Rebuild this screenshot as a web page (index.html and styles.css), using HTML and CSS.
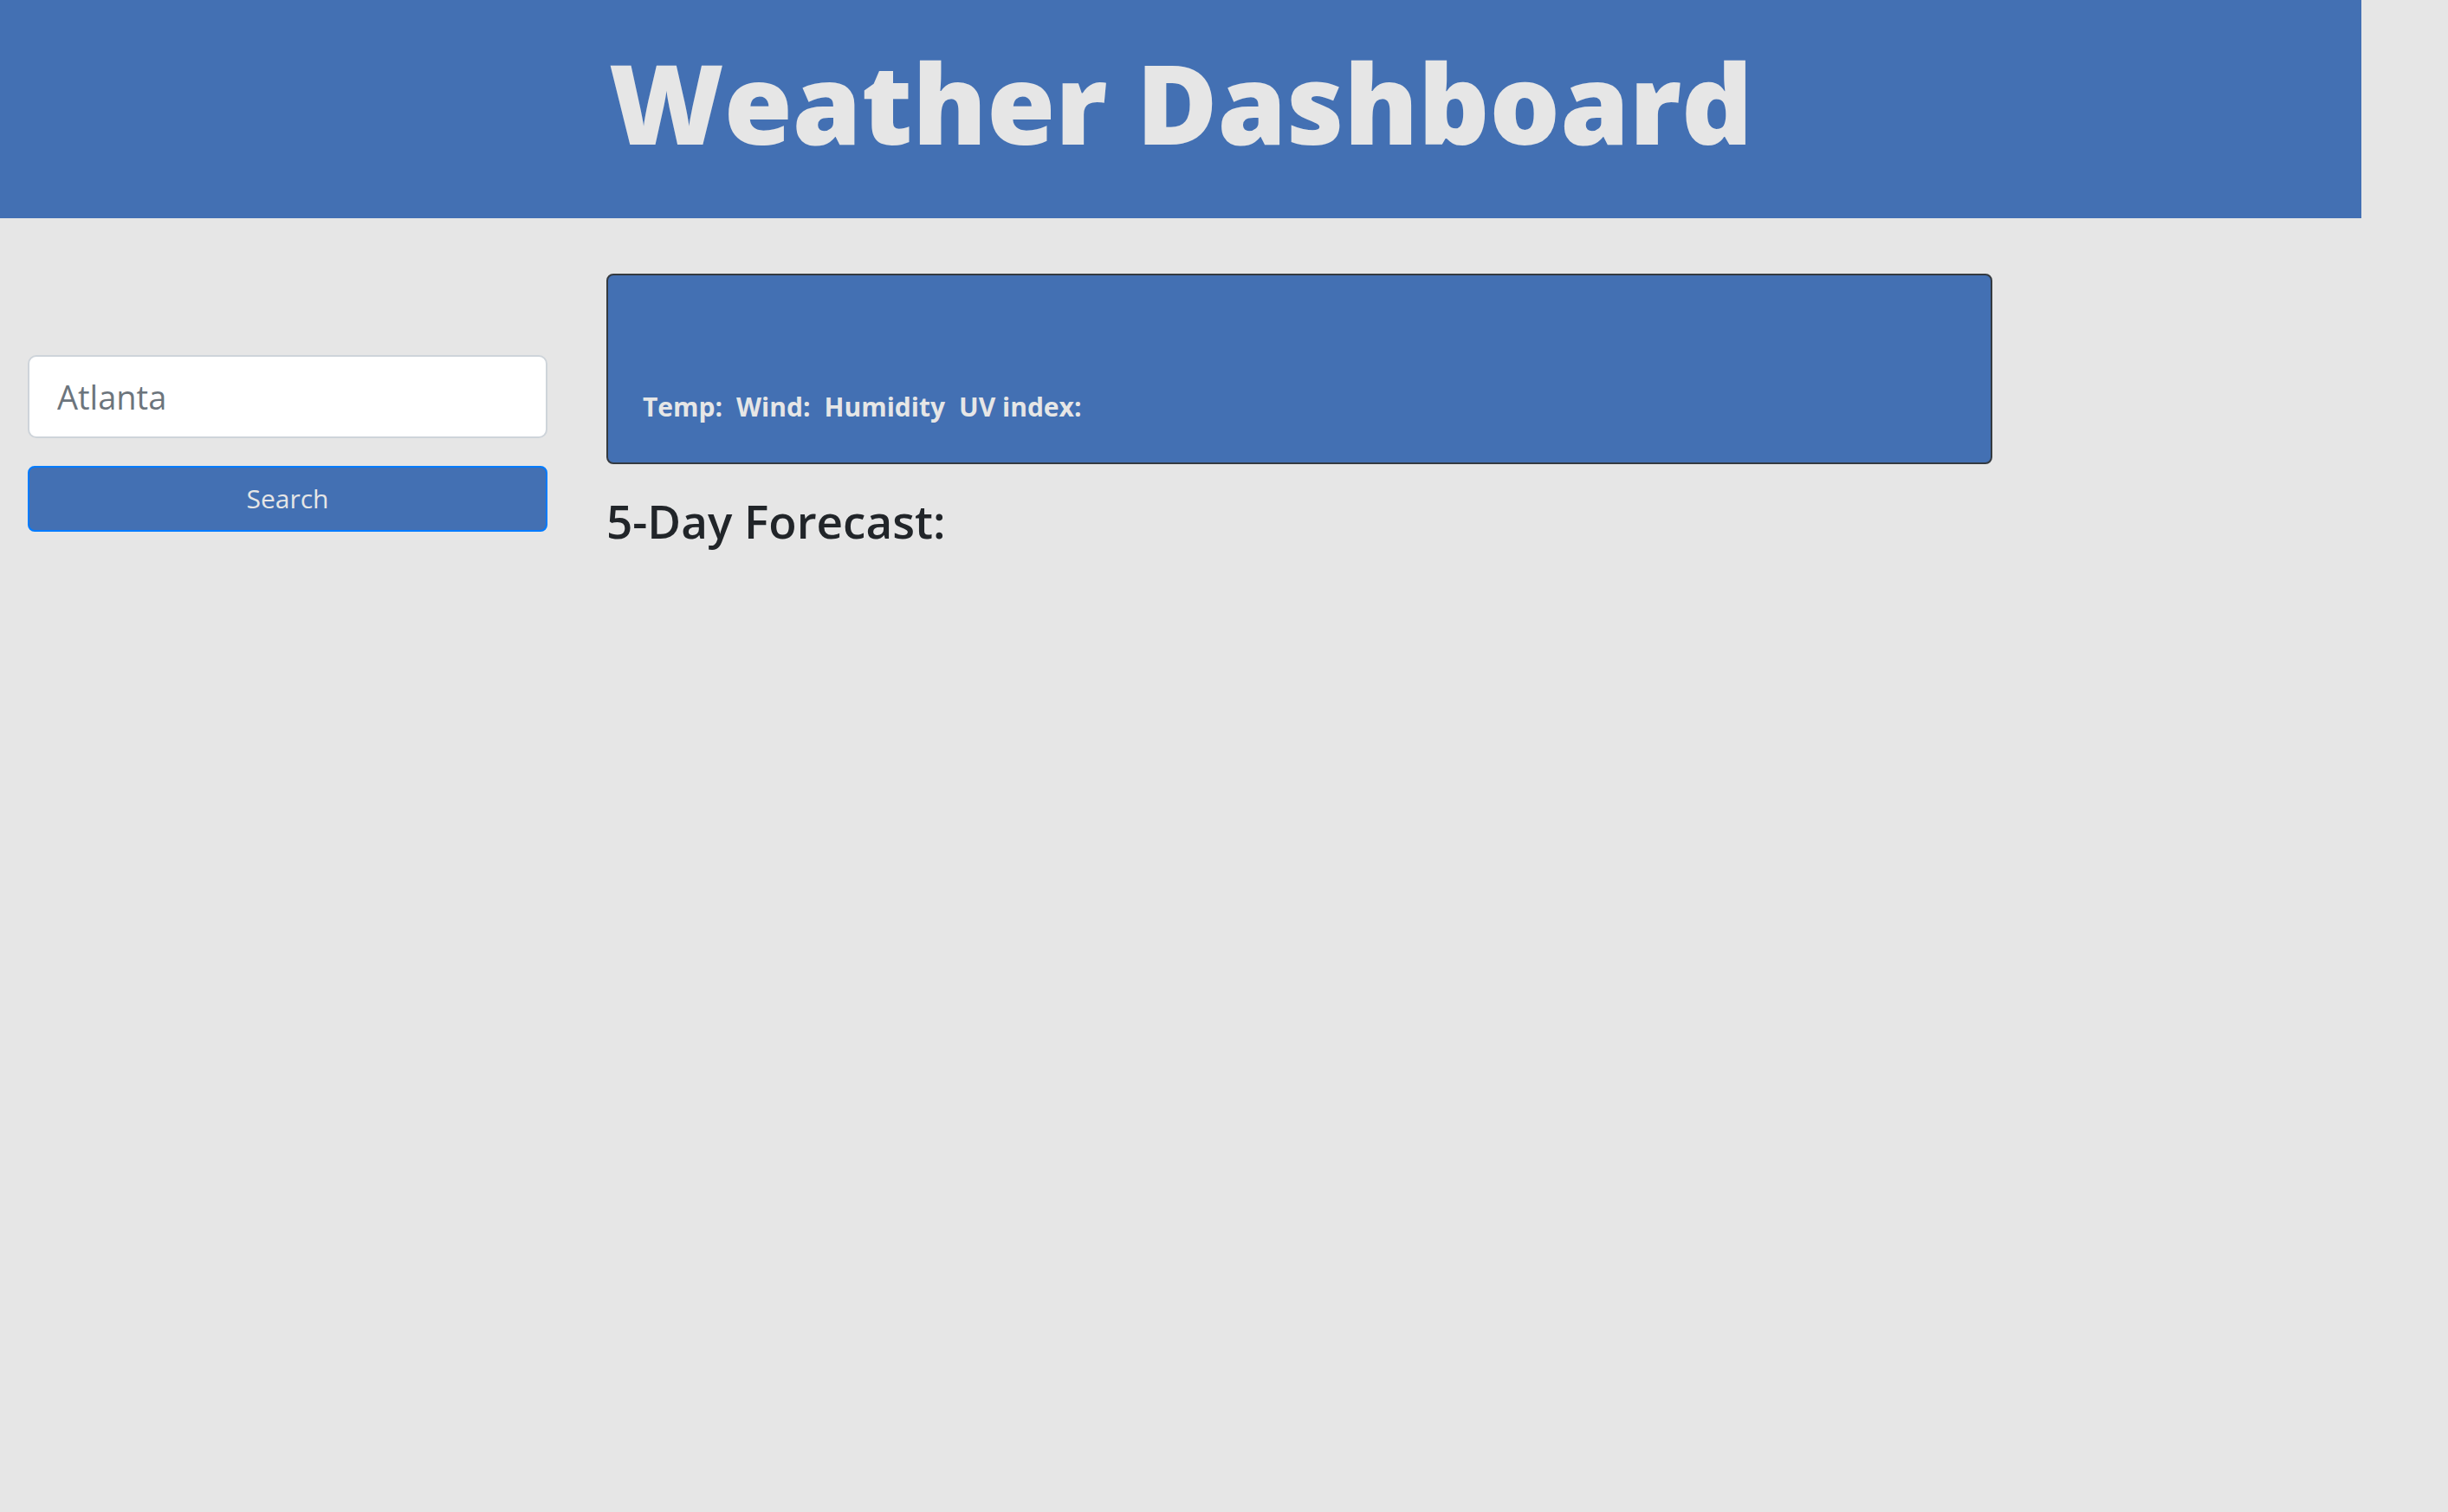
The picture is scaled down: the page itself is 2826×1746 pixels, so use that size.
FILE: index.html
```html
<!DOCTYPE html>
<html lang="en">
<head>
  <meta charset="utf-8">
  <meta name="viewport" content="width=device-width, initial-scale=1">
  <title>Weather Dashboard</title>
  <link rel="stylesheet" href="styles.css">
</head>
<body>
  <header class="banner">
    <h1 class="banner-title">Weather Dashboard</h1>
  </header>
  <main class="layout">
    <form class="search">
      <input class="search-input" type="text" placeholder="Atlanta" aria-label="City">
      <button class="search-button" type="submit">Search</button>
    </form>
    <div class="results">
      <section class="current" aria-label="Current weather">
        <ul class="stats">
          <li>Temp:</li>
          <li>Wind:</li>
          <li>Humidity</li>
          <li>UV index:</li>
        </ul>
      </section>
      <h2 class="forecast-title">5-Day Forecast:</h2>
    </div>
  </main>
</body>
</html>
```

FILE: styles.css
```css
* {
  box-sizing: border-box;
}

body {
  margin: 0;
  background: #e6e6e6;
  color: #212529;
  font-family: "Open Sans", "Noto Sans", sans-serif;
  font-size: 30px;
  line-height: 48px;
}

.banner {
  margin-right: 100px;
  padding: 38px 32px 54px;
  background: #4370b3;
  color: #e6e6e6;
  text-align: center;
}

.banner-title {
  margin: 0;
  font-size: 128px;
  font-weight: 800;
  line-height: 160px;
}

.layout {
  display: flex;
  align-items: flex-start;
  gap: 68px;
  padding: 64px 32px;
}

.search {
  display: flex;
  flex: 0 1 600px;
  flex-direction: column;
  gap: 32px;
  padding-top: 94px;
}

.search-input {
  width: 100%;
  padding: 16px 32px;
  border: 2px solid #ced4da;
  border-radius: 10px;
  background: #fff;
  color: #495057;
  font: inherit;
  font-size: 38px;
  line-height: 60px;
}

.search-input::placeholder {
  color: #6c757d;
  opacity: 1;
}

.search-button {
  padding: 12px 24px;
  border: 2px solid #007bff;
  border-radius: 8px;
  background: #4370b3;
  color: #e6e6e6;
  font: inherit;
}

.results {
  flex: 0 1 1600px;
}

.current {
  padding: 128px 40px 40px;
  border: 2px solid #343a40;
  border-radius: 8px;
  background: #4370b3;
  color: #e6e6e6;
}

.stats {
  display: flex;
  gap: 16px;
  margin: 0;
  padding: 0;
  font-weight: 700;
  list-style: none;
}

.forecast-title {
  margin: 32px 0 0;
  font-size: 53px;
  font-weight: 600;
  line-height: 68px;
}
```
